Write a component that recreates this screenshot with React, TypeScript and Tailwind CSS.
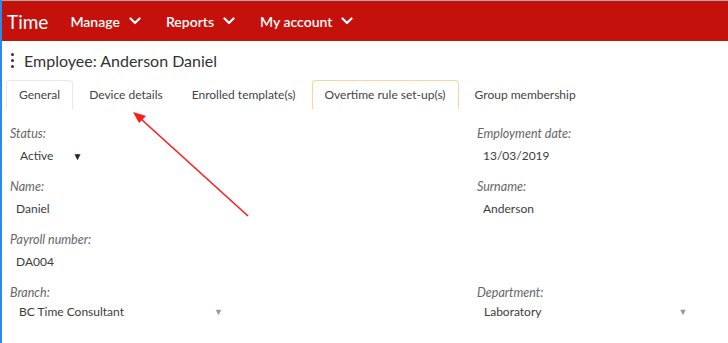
const nav = ["Manage", "Reports", "My account"];

const tabs = [
  { label: "General", kind: "active" },
  { label: "Device details", kind: "" },
  { label: "Enrolled template(s)", kind: "" },
  { label: "Overtime rule set-up(s)", kind: "hover" },
  { label: "Group membership", kind: "" },
];

function Chevron() {
  return (
    <svg width="12" height="8" viewBox="0 0 12 8" fill="none">
      <polyline points="1.5,1.5 6,6 10.5,1.5" stroke="white" strokeWidth="2.2" strokeLinecap="round" strokeLinejoin="round" />
    </svg>
  );
}

function Field({ label, value, pad = "pl-[6px]", select, arrowX, tight }: { label: string; value: string; pad?: string; select?: boolean; arrowX?: string; tight?: boolean }) {
  return (
    <div className="h-[53px]">
      <p className="text-[12.5px] italic text-[#666] leading-[16px] pt-[1px]">{label}</p>
      <div className={`flex items-center h-[20px] ${tight ? "mt-[1px]" : "mt-[4px]"} ${pad} text-[12px] text-[#3c3c3c]`}>
        <span>{value}</span>
        {select && <span className={`text-[#999] text-[9px] ${arrowX}`}>▼</span>}
      </div>
    </div>
  );
}

export default function App() {
  return (
    <div className="relative w-[728px] h-[343px] bg-white overflow-hidden border-l-2 border-[#2a8ce8]" style={{ fontFamily: "Lato, 'Open Sans', sans-serif" }}>
      {/* Top bar */}
      <div className="border-t border-[#a8a8a8] bg-[#c4110b] h-[41px] flex items-center text-white">
        <span className="ml-[5px] text-[19px] leading-none">Time</span>
        <nav className="flex ml-[22px] gap-[25px]">
          {nav.map((n) => (
            <span key={n} className="flex items-center gap-[9px] text-[14px] font-semibold">
              {n}
              <Chevron />
            </span>
          ))}
        </nav>
      </div>

      {/* Title */}
      <div className="flex items-center h-[37px] pl-[9px] pt-[2px]">
        <span className="flex flex-col gap-[3px] mr-[10px]">
          <span className="w-[3px] h-[3px] rounded-full bg-[#333]" />
          <span className="w-[3px] h-[3px] rounded-full bg-[#333]" />
          <span className="w-[3px] h-[3px] rounded-full bg-[#333]" />
        </span>
        <h1 className="text-[16px] text-[#333]">Employee: Anderson Daniel</h1>
      </div>

      {/* Tabs */}
      <div className="flex gap-[3px] pl-[4px] h-[29px] mt-[2px]">
        {tabs.map((t) => (
          <div
            key={t.label}
            className={`px-[12px] flex items-center text-[12px] text-[#444] rounded-t-[4px] border border-b-0 ${
              t.kind === "active" ? "border-[#e8e8e8]" : t.kind === "hover" ? "border-[#fbd49a]" : "border-transparent"
            }`}
          >
            {t.label}
          </div>
        ))}
      </div>

      {/* Form */}
      <div className="grid grid-cols-[467px_1fr] pl-[8px] pt-[16px]">
        <div>
          <Field label="Status:" value="Active" pad="pl-[10px]" select arrowX="ml-[19px] !text-[#222] !text-[10px]" />
          <Field label="Name:" value="Daniel" />
          <Field label="Payroll number:" value="DA004" />
          <Field label="Branch:" value="BC Time Consultant" pad="pl-[9px]" select arrowX="ml-[90px]" tight />
        </div>
        <div>
          <Field label="Employment date:" value="13/03/2019" />
          <Field label="Surname:" value="Anderson" />
          <div className="h-[53px]" />
          <Field label="Department:" value="Laboratory" pad="pl-[7px]" select arrowX="ml-[137px]" tight />
        </div>
      </div>

      {/* Annotation arrow */}
      <svg className="absolute left-0 top-0 pointer-events-none" width="728" height="343">
        <line x1="246" y1="216" x2="139" y2="119" stroke="#ff1a1a" strokeWidth="1.6" />
        <polygon points="131,112 144,116 137,123" fill="#ff1a1a" />
      </svg>
    </div>
  );
}
